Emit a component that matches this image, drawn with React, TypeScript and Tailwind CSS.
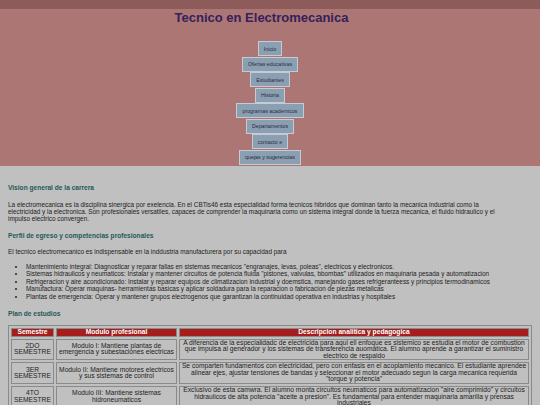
const menu = [
  'Inicio',
  'Ofertas educativas',
  'Estudiantes',
  'Historia',
  'programas academicos',
  'Departamentos',
  'contacto e',
  'quejas y sugerencias',
]

const perfil = [
  'Mantenimiento integral: Diagnosticar y reparar fallas en sistemas mecanicos "engranajes, levas, poleas", electricos y electronicos.',
  'Sistemas hidraulicos y neumaticos: Instalar y mantener circuitos de potencia fluida "pistones, valvulas, bbombas" utilizados en maquinaria pesada y automatizacion',
  'Refrigeracion y aire acondicionado: Instalar y reparar equipos de climatizacion industrial y doemstica, manejando gases refrigeranteess y principios termodinamicos',
  'Manufactura: Operar maquinas- herramientas basicas y aplicar soldadura para la reparacion o fabricacion de piezas metalicas',
  'Plantas de emergencia: Operar y mantener grupos electrogenos que garantizan la continuidad operativa en industrias y hospitales',
]

const plan = [
  {
    sem: ['2DO', 'SEMESTRE'],
    modulo: 'Modulo I: Mantiene plantas de emergencia y subestaciones electricas',
    desc: 'A diferencia de la especialidadc de electricida para aqui ell enfoque es sistemico se estudia el motor de combustion que impulsa al generador y los sistemas de transferencia auomatica. El alumno aprende a garantizar el suministro electrico de respaldo',
  },
  {
    sem: ['3ER', 'SEMESTRE'],
    modulo: 'Modulo II: Mantiene motores electricos y sus sistemas de control',
    desc: 'Se comparten fundamentos con electricidad, pero con enfasis en el acoplamiento mecanico. El estudiante aprendee alinear ejes, ajustar tensiones de bandas y seleccionar el motor adecuado segun la carga mecanica requerida "torque y potencia"',
  },
  {
    sem: ['4TO', 'SEMESTRE'],
    modulo: 'Modulo III: Mantiene sistemas hidroneumaticos',
    desc: 'Exclusivo de esta camwra. El alumno monta circuitos neumaticos para automatizacion "aire comprimido" y circuitos hidraulicos de alta potencia "aceite a presion". Es fundamental para entender maquinaria amarilla y prensas industriales',
  },
]

export default function App() {
  return (
    <div className="min-h-[405px] bg-[#c0c0c0] font-['Liberation_Sans',Arial,sans-serif] text-[#222]">
      {/* cabecera */}
      <div className="h-[9px] bg-[#8d5b5a]" />
      <header className="bg-[#ac7674] pt-[1px] pb-[1px] text-center">
        <h1 className="pr-[17px] text-[13px] leading-[15px] font-bold text-[#35215b]">Tecnico en Electromecanica</h1>
        <nav className="mt-[16px] flex flex-col items-center gap-[0.5px]">
          {menu.map((m) => (
            <a
              key={m}
              className="flex h-[15px] items-center border border-[#c6cad3] bg-[#8a9fb2] px-[5px] text-[5.3px] leading-[6px] text-[#2b2b3b]"
            >
              {m}
            </a>
          ))}
        </nav>
      </header>

      <main className="px-[8px] pb-[8px] text-[6.4px] leading-[7.36px]">
        <h3 className="mt-[17px] text-[6.6px] leading-[9px] font-bold text-[#1e5a58]">Vision general de la carrera</h3>
        <p className="mt-[9px] pr-[30px]">
          La electromecanica es la disciplina sinergica por exelencia. En el CBTis46 esta especialidad forma tecnicos hibridos que dominan tanto la mecanica industrial como la electricidad y la electronica. Son profesionales versatiles, capaces de comprender la maquinaria como un sistema integral donde la fuerza mecanica, el fluido hidraulico y el impulso electrico convergen.
        </p>

        <h3 className="mt-[8.5px] text-[6.6px] leading-[9px] font-bold text-[#1e5a58]">Perfil de egreso y competencias profesionales</h3>
        <p className="mt-[8px]">El tecnico electromecanico es indispensable en la inddustria manufacturera por su capacidad para</p>
        <ul className="mt-[7.7px] list-disc pl-[18px]">
          {perfil.map((p) => (
            <li key={p}>{p}</li>
          ))}
        </ul>

        <h3 className="mt-[9px] text-[6.6px] leading-[9px] font-bold text-[#1e5a58]">Plan de estudios</h3>
        <table className="mt-[7px] w-full border-separate border-spacing-[2px] border border-[#8a8a8a] text-[6.7px] leading-[6.6px]">
          <thead>
            <tr>
              <th className="w-[43px] border border-[#8a8a8a] bg-[#a51d1d] p-0 font-bold text-white">Semestre</th>
              <th className="w-[121px] border border-[#8a8a8a] bg-[#a51d1d] p-0 font-bold text-white">Modulo profesional</th>
              <th className="border border-[#8a8a8a] bg-[#a51d1d] p-0 font-bold text-white">Descripcion analitica y pedagogica</th>
            </tr>
          </thead>
          <tbody>
            {plan.map((r) => (
              <tr key={r.modulo}>
                <td className="border border-[#8a8a8a] p-0 text-center">
                  {r.sem[0]}
                  <br />
                  {r.sem[1]}
                </td>
                <td className="border border-[#8a8a8a] p-0 text-center">{r.modulo}</td>
                <td className="border border-[#8a8a8a] p-0 text-center">{r.desc}</td>
              </tr>
            ))}
          </tbody>
        </table>
      </main>
    </div>
  )
}
